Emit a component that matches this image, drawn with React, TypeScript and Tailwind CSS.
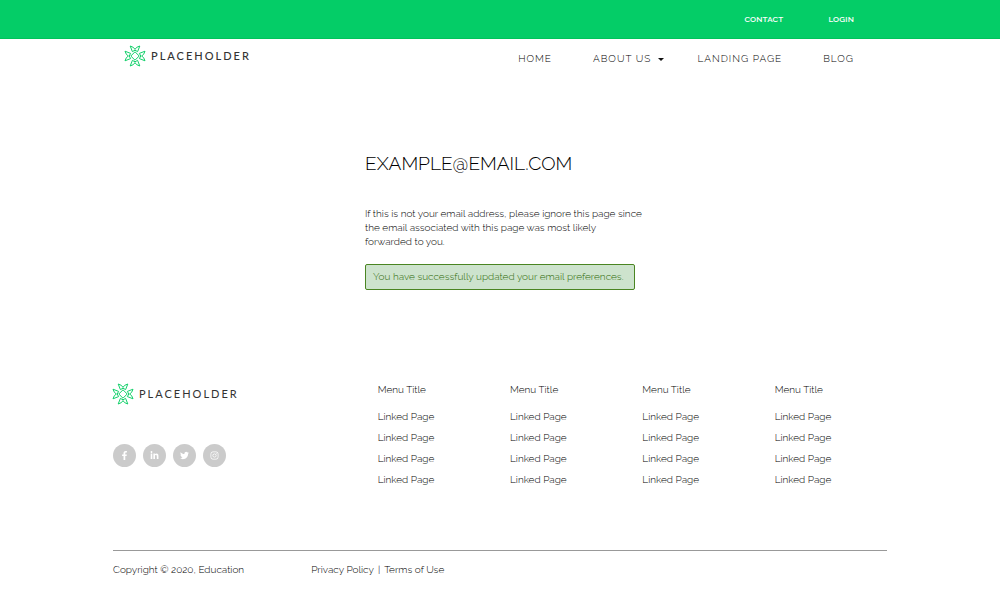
import React from "react";
import { FaFacebookF, FaInstagram, FaLinkedinIn, FaTwitter } from "react-icons/fa";

const navLinks = ["HOME", "ABOUT US", "LANDING PAGE", "BLOG"];
const menus = ["Menu Title", "Menu Title", "Menu Title", "Menu Title"];
const pages = ["Linked Page", "Linked Page", "Linked Page", "Linked Page"];
const socials = [
  { label: "Facebook", Icon: FaFacebookF },
  { label: "LinkedIn", Icon: FaLinkedinIn },
  { label: "Twitter", Icon: FaTwitter },
  { label: "Instagram", Icon: FaInstagram },
];

function Mark() {
  return (
    <svg viewBox="-11 -11 22 22" className="size-[22px] shrink-0" fill="none" stroke="#12d06a" strokeWidth="1" strokeLinejoin="round" aria-hidden="true">
      <path d="M0-4.2 4.2 0 0 4.2-4.2 0Z" />
      {[0, 90, 180, 270].map((angle) => (
        <path key={angle} transform={`rotate(${angle})`} d="M0-5.8-2.6-4.4-4.8-10-1.6-8.6 0-6.6 1.6-8.6 4.8-10 2.6-4.4Z" />
      ))}
    </svg>
  );
}

function Logo({ footer = false }: { footer?: boolean }) {
  return (
    <a href="#" className="flex items-center gap-[5px] font-['Lato',sans-serif] text-[#333]">
      <Mark />
      <span className={footer ? "text-[11px] leading-4 font-normal tracking-[2px]" : "text-[11px] leading-4 font-medium tracking-[2px]"}>PLACEHOLDER</span>
    </a>
  );
}

export default function App() {
  return (
    <div className="bg-white font-['Raleway','Open_Sans',sans-serif] text-[10px] font-light text-black">
      <header>
        <div className="border-b border-[#00c35a] bg-[#04cd67]">
          <nav aria-label="Account" className="mx-auto flex h-[38px] w-[77.4%] items-center justify-end gap-[45px] pr-[33px] text-[8px] font-semibold tracking-wide text-white">
            <a href="#">CONTACT</a>
            <a href="#">LOGIN</a>
          </nav>
        </div>
        <div className="mx-auto flex w-[77.4%] items-start justify-between pt-[6px] pr-[33px] pl-[11px]">
          <Logo />
          <nav aria-label="Main" className="flex gap-[41px] pt-[5px] leading-[18px] tracking-[1px]">
            {navLinks.map((link) => (
              <a key={link} href="#" className="flex items-center gap-[7px]">
                {link}
                {link === "ABOUT US" && (
                  <svg viewBox="0 0 6 3" className="mr-[-8px] h-[3px] w-[6px]" fill="#111" aria-hidden="true">
                    <path d="M0 0h6L3 3Z" />
                  </svg>
                )}
              </a>
            ))}
          </nav>
        </div>
      </header>

      <main className="mx-auto w-[27%] pt-[83px]">
        <h1 className="text-[19px] leading-6 text-black">EXAMPLE@EMAIL.COM</h1>
        <p className="mr-[-10px] pt-8 leading-[14px]">
          If this is not your email address, please ignore this page since the email associated with this page was most likely forwarded to you.
        </p>
        <p role="status" className="mt-[15px] rounded-[2px] border border-[#4a8522] bg-[#cde3cd] px-[7px] py-[5px] leading-[14px] text-[#2f6b0a]">
          You have successfully updated your email preferences.
        </p>
      </main>

      <footer className="mx-auto w-[77.4%] pt-[93px]">
        <div className="flex">
          <div className="w-[34.2%]">
            <div className="ml-[-1px]">
              <Logo footer />
            </div>
            <div className="flex gap-[7px] pt-[39px]">
              {socials.map(({ label, Icon }) => (
                <a key={label} href="#" aria-label={label} className="flex size-[23px] items-center justify-center rounded-full bg-[#cbcbcb] text-[9px] text-white">
                  <Icon />
                </a>
              ))}
            </div>
          </div>
          <div className="mr-[-20px] grid flex-1 grid-cols-4">
            {menus.map((title, i) => (
              <section key={i}>
                <h2 className="leading-[14px]">{title}</h2>
                <ul className="grid gap-[7px] pt-[13px]">
                  {pages.map((page, j) => (
                    <li key={j} className="leading-[14px]">
                      <a href="#">{page}</a>
                    </li>
                  ))}
                </ul>
              </section>
            ))}
          </div>
        </div>
        <div className="mt-[63px] flex border-t border-[#999] pt-3 pb-[14px] leading-[14px]">
          <p className="w-[25.6%]">Copyright © 2020, Education</p>
          <p className="flex gap-1">
            <a href="#">Privacy Policy</a>
            <span>|</span>
            <a href="#">Terms of Use</a>
          </p>
        </div>
      </footer>
    </div>
  );
}
